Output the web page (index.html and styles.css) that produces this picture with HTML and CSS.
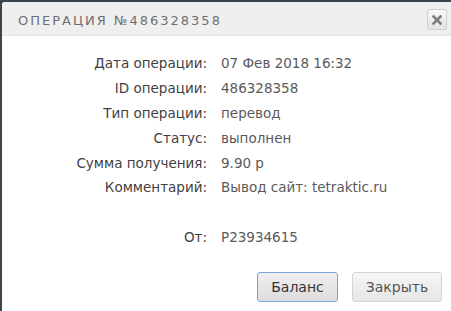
FILE: index.html
```html
<!DOCTYPE html>
<html lang="ru">
<head>
<meta charset="utf-8">
<link rel="stylesheet" href="styles.css">
</head>
<body>
<div class="dialog">
  <div class="header">
    <span class="title">Операция №486328358</span>
    <button class="close" aria-label="Закрыть">
      <svg width="10" height="10" viewBox="0 0 10 10"><path d="M1.5 1.5 L8.5 8.5 M8.5 1.5 L1.5 8.5" stroke="#7d7d7d" stroke-width="2.6" stroke-linecap="square"/></svg>
    </button>
  </div>
  <div class="body">
    <div class="info">
      <div class="label">Дата операции:</div><div class="value">07 Фев 2018 16:32</div>
      <div class="label">ID операции:</div><div class="value">486328358</div>
      <div class="label">Тип операции:</div><div class="value">перевод</div>
      <div class="label">Статус:</div><div class="value">выполнен</div>
      <div class="label">Сумма получения:</div><div class="value">9.90 р</div>
      <div class="label">Комментарий:</div><div class="value">Вывод сайт: tetraktic.ru</div>
      <div class="label"></div><div class="value"></div>
      <div class="label">От:</div><div class="value">P23934615</div>
    </div>
    <div class="actions">
      <button class="btn btn-focus">Баланс</button>
      <button class="btn btn-plain">Закрыть</button>
    </div>
  </div>
</div>
</body>
</html>
```
FILE: styles.css
```css
html, body {
  margin: 0;
  padding: 0;
}
body {
  background: #3a454c;
  width: 451px;
  height: 311px;
  overflow: hidden;
}
.dialog {
  margin: 2px 0 0 2px;
  width: 452px;
  height: 312px;
  background: #ffffff;
  border-radius: 3px;
  overflow: hidden;
  display: flex;
  flex-direction: column;
}
.header {
  height: 33px;
  background: #efefef;
  border-bottom: 1px solid #e6e6e6;
  display: flex;
  align-items: center;
  justify-content: space-between;
  padding: 0 7px 0 16px;
}
.title {
  font-family: "DejaVu Sans", sans-serif;
  font-size: 13px;
  letter-spacing: 2px;
  color: #6f6f6f;
  text-transform: uppercase;
  margin-top: 3px;
}
.close {
  width: 20px;
  height: 21px;
  padding: 0;
  margin-top: 2px;
  border: 1px solid #cfcfcf;
  border-radius: 3px;
  background: linear-gradient(#f8f8f8, #e4e4e4);
  display: flex;
  align-items: center;
  justify-content: center;
}
.body {
  padding: 15px 0 0 0;
  display: flex;
  flex-direction: column;
}
.info {
  display: grid;
  grid-template-columns: 205px 1fr;
  column-gap: 14px;
  grid-auto-rows: 24.8px;
  align-items: center;
  font-family: "DejaVu Sans", sans-serif;
  font-size: 13.5px;
}
.label {
  text-align: right;
  color: #3f3f3f;
}
.value {
  color: #5a5a5a;
}
.actions {
  display: flex;
  justify-content: flex-end;
  gap: 14px;
  padding: 23px 12px 0 0;
}
.btn {
  height: 30px;
  padding: 0;
  font-family: "DejaVu Sans", sans-serif;
  font-size: 14px;
  border-radius: 3px;
}
.btn-focus {
  width: 81px;
  color: #333;
  border: 1px solid #78a3dc;
  background: linear-gradient(#f0f0f0, #dcdcdc);
}
.btn-plain {
  width: 90px;
  color: #555;
  border: 1px solid #d4d4d4;
  background: linear-gradient(#f6f6f6, #e6e6e6);
}
```
